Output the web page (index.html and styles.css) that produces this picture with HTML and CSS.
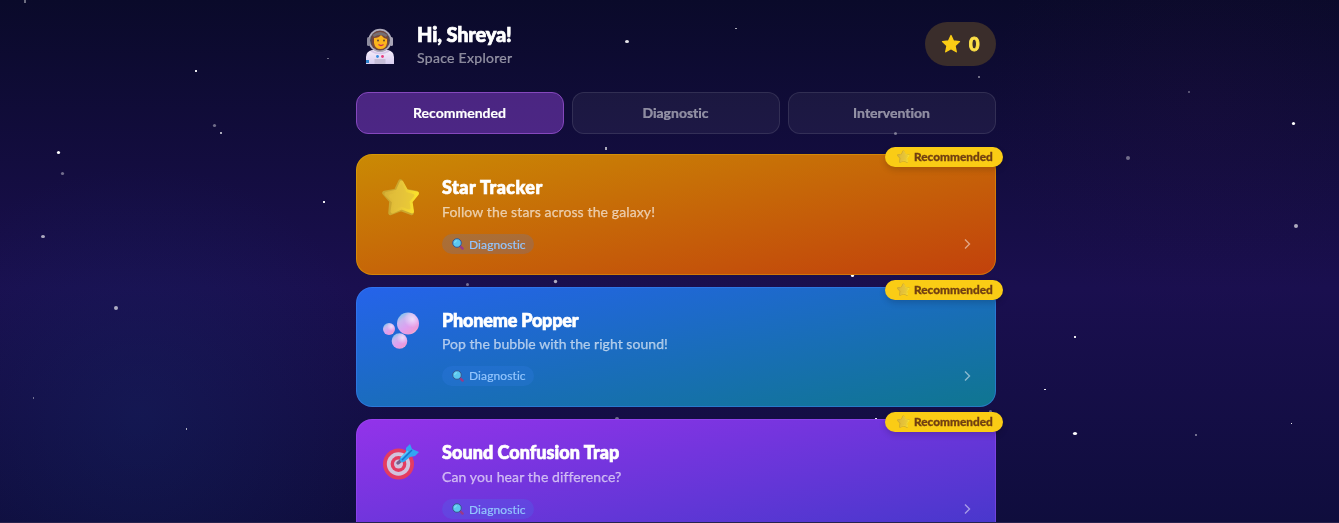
FILE: index.html
```html
<!DOCTYPE html>
<html lang="en">
<head>
  <meta charset="UTF-8" />
  <meta name="viewport" content="width=device-width, initial-scale=1.0"/>
  <title>Space Explorer</title>
  <link rel="stylesheet" href="styles.css">
</head>
<body>
  <svg class="stars" width="1339" height="523" fill="#fff" aria-hidden="true">
    <g opacity="0.4">
      <rect x="24" y="0" width="2" height="3"/>
      <rect x="327" y="58" width="2" height="1"/>
      <circle cx="214.5" cy="125.5" r="1.6"/>
      <circle cx="62.5" cy="173.5" r="1.6"/>
      <rect x="33" y="397" width="1" height="2"/>
      <rect x="1188" y="91" width="2" height="2" opacity="0.7"/>
      <circle cx="1128" cy="158" r="2"/>
      <rect x="1195" y="434" width="2" height="2"/>
      <rect x="978" y="76" width="2" height="2"/>
      <circle cx="895.5" cy="133.5" r="1.5"/>
      <circle cx="467.5" cy="284.5" r="1.5"/>
      <circle cx="617" cy="419" r="2"/>
      <circle cx="990.5" cy="411.5" r="1.5"/>
      <rect x="462" y="109" width="2" height="2"/>
    </g>
    <g opacity="0.65">
      <rect x="220" y="132" width="2" height="2"/>
      <ellipse cx="43" cy="236.5" rx="2" ry="1.5"/>
      <circle cx="116" cy="308" r="2"/>
      <rect x="186" y="428" width="1" height="2"/>
      <circle cx="1296" cy="226" r="2"/>
      <rect x="735" y="28" width="2" height="1"/>
      <rect x="605" y="147" width="2" height="3"/>
      <circle cx="555.5" cy="281.5" r="1.7"/>
    </g>
    <g opacity="0.9">
      <rect x="195" y="70" width="2" height="2"/>
      <rect x="323" y="201" width="2" height="2"/>
      <rect x="1074" y="336" width="2" height="2"/>
      <rect x="1044" y="389" width="2" height="1"/>
      <rect x="1291" y="423" width="1" height="1"/>
      <rect x="875" y="418" width="2" height="1"/>
      <ellipse cx="627" cy="41.5" rx="2" ry="1.5"/>
    </g>
    <circle cx="58.5" cy="152.5" r="1.6"/>
    <circle cx="1293.5" cy="123.5" r="1.6"/>
    <ellipse cx="1075" cy="433.5" rx="2.1" ry="1.6"/>
    <circle cx="852.5" cy="275.5" r="1.6"/>
  </svg>

  <!-- shared icons -->
  <svg class="defs" width="0" height="0" aria-hidden="true">
    <defs>
      <linearGradient id="gold" x1="0" y1="0.3" x2="1" y2="0.4">
        <stop offset="0" stop-color="#d9b336"/>
        <stop offset="0.5" stop-color="#e8c63a"/>
        <stop offset="1" stop-color="#fbe22a"/>
      </linearGradient>
      <linearGradient id="bubble" x1="0.1" y1="0" x2="0.85" y2="1">
        <stop offset="0" stop-color="#62ccec"/>
        <stop offset="0.28" stop-color="#c8b6ef"/>
        <stop offset="0.58" stop-color="#dda0f0"/>
        <stop offset="0.85" stop-color="#ee9ad8"/>
        <stop offset="1" stop-color="#f5d9c0"/>
      </linearGradient>
      <radialGradient id="shine" cx="0.7" cy="0.3" r="0.38">
        <stop offset="0" stop-color="#fff" stop-opacity="0.6"/>
        <stop offset="1" stop-color="#fff" stop-opacity="0"/>
      </radialGradient>
      <linearGradient id="suit" x1="0" y1="0" x2="0" y2="1">
        <stop offset="0" stop-color="#f6eefb"/>
        <stop offset="1" stop-color="#d8cdf0"/>
      </linearGradient>
      <symbol id="star3d" viewBox="0 0 38 38">
        <path d="M18.500 3.500 L23 13 L34.500 15 L27.500 23 L29.500 35 L19 31 L8.500 35 L9.500 23 L2.500 15 L14 13 Z" fill="#cba62e" stroke="#cba62e" stroke-width="4.500" stroke-linejoin="round"/>
        <path d="M19.500 4.500 L24.500 13.500 L35 15.500 L28.500 23.500 L30 33.500 L19.500 29.500 L10.500 33.500 L12 23.500 L4.500 16 L15.500 13.500 Z" fill="url(#gold)" stroke="url(#gold)" stroke-width="4" stroke-linejoin="round"/>
        <path d="M19.500 8 L23.500 15.500 L31 17.500 L26 23 L27 30 L19.500 27 L13 30 L14 23 L8.500 18 L16.500 15.500 Z" fill="#e3c03b" stroke="#e3c03b" stroke-width="3" stroke-linejoin="round" opacity="0.6"/>
      </symbol>
      <symbol id="magnifier" viewBox="0 0 12 12">
        <path d="M7.500 7.500 L10.600 10.600" stroke="#993a86" stroke-width="2.400" stroke-linecap="round"/>
        <circle cx="5" cy="5" r="4.300" fill="#5bc8f0" stroke="#39568f" stroke-width="1"/>
        <path d="M2.700 5 A2.300 2.300 0 0 1 5 2.700" fill="none" stroke="#86e3f7" stroke-width="1"/>
      </symbol>
    </defs>
  </svg>

  <div class="container">
    <header class="header">
      <div class="profile">
        <svg class="avatar" viewBox="0 0 48 44" aria-hidden="true">
          <path d="M10 42 V35 Q10 29 17 28 H31 Q38 29 38 35 V42 Z" fill="url(#suit)"/>
          <circle cx="24" cy="18.500" r="11.700" fill="#aeaaba"/>
          <rect x="11" y="15" width="3" height="9" rx="1.500" fill="#8e8c9e"/>
          <rect x="34" y="15" width="3" height="9" rx="1.500" fill="#aaa6b7"/>
          <circle cx="24" cy="18.500" r="10" fill="#574b50"/>
          <path d="M16 23 V16 Q17 9 24 9 Q31 9 32 16 V23 Q29 28 24 28 Q19 28 16 23 Z" fill="#794638"/>
          <path d="M18 16 Q23 16 25 13 Q27 16 31 17 V21 Q30 27 24.500 27 Q19 27 18 21 Z" fill="#fbb51d"/>
          <path d="M16.500 13 Q24 7 31.500 13 L30 15 Q24 11 18 15 Z" fill="#746e74"/>
          <circle cx="22" cy="18.500" r="0.900" fill="#593c31"/>
          <circle cx="28" cy="18.500" r="0.900" fill="#593c31"/>
          <path d="M22.500 22.500 Q25 24.500 27.500 22.500" fill="none" stroke="#c92d54" stroke-width="1.300"/>
          <path d="M15 29 Q24 34 33 29" fill="none" stroke="#d7c8e9" stroke-width="1.500"/>
          <circle cx="21.500" cy="34.500" r="1.400" fill="#348be0"/>
          <circle cx="26.500" cy="34.500" r="1.400" fill="#e83d7d"/>
          <rect x="18.500" y="37" width="11" height="5" fill="#c7bed8"/>
          <rect x="10" y="38" width="3" height="3" fill="#2e83cc"/>
        </svg>
        <div class="who">
          <h1 class="greeting">Hi, Shreya!</h1>
          <p class="role">Space Explorer</p>
        </div>
      </div>
      <div class="score">
        <svg class="score-star" viewBox="0 0 20 20" aria-hidden="true">
          <path d="M10 1.500 L12.500 7 L18.500 7.600 L14 11.700 L15.300 17.800 L10 14.700 L4.700 17.800 L6 11.700 L1.500 7.600 L7.500 7 Z" fill="#facc15" stroke="#facc15" stroke-width="1.300" stroke-linejoin="round"/>
        </svg>
        <span>0</span>
      </div>
    </header>

    <nav class="tabs">
      <button class="tab active">Recommended</button>
      <button class="tab">Diagnostic</button>
      <button class="tab">Intervention</button>
    </nav>

    <main class="games">
      <article class="card card-star">
        <div class="ribbon"><svg class="ribbon-icon"><use href="#star3d"/></svg><span>Recommended</span></div>
        <svg class="card-icon" viewBox="0 0 38 38" aria-hidden="true"><use href="#star3d"/></svg>
        <div class="card-body">
          <h2 class="card-title title-wide">Star Tracker</h2>
          <p class="card-text">Follow the stars across the galaxy!</p>
          <div class="card-foot">
            <span class="tag"><svg class="tag-icon"><use href="#magnifier"/></svg><span>Diagnostic</span></span>
            <svg class="chevron" viewBox="0 0 8 12"><path d="M2 1.500 L6.500 6 L2 10.500"/></svg>
          </div>
        </div>
      </article>

      <article class="card card-phoneme">
        <div class="ribbon"><svg class="ribbon-icon"><use href="#star3d"/></svg><span>Recommended</span></div>
        <svg class="card-icon" viewBox="0 0 38 38" aria-hidden="true">
          <circle cx="26" cy="12.500" r="11" fill="url(#bubble)"/>
          <circle cx="26" cy="12.500" r="11" fill="url(#shine)"/>
          <circle cx="7" cy="18" r="6" fill="url(#bubble)"/>
          <circle cx="7" cy="18" r="6" fill="url(#shine)"/>
          <circle cx="17.500" cy="30" r="7.800" fill="url(#bubble)"/>
          <circle cx="17.500" cy="30" r="7.800" fill="url(#shine)"/>
        </svg>
        <div class="card-body">
          <h2 class="card-title title-tight">Phoneme Popper</h2>
          <p class="card-text">Pop the bubble with the right sound!</p>
          <div class="card-foot">
            <span class="tag"><svg class="tag-icon"><use href="#magnifier"/></svg><span>Diagnostic</span></span>
            <svg class="chevron" viewBox="0 0 8 12"><path d="M2 1.500 L6.500 6 L2 10.500"/></svg>
          </div>
        </div>
      </article>

      <article class="card card-sound">
        <div class="ribbon"><svg class="ribbon-icon"><use href="#star3d"/></svg><span>Recommended</span></div>
        <svg class="card-icon" viewBox="0 0 38 38" aria-hidden="true">
          <circle cx="16.500" cy="21" r="15.500" fill="#e43c61"/>
          <circle cx="16.500" cy="21" r="11.700" fill="#d2c3de"/>
          <circle cx="16.500" cy="21" r="7.900" fill="#e43c61"/>
          <circle cx="16.500" cy="21" r="4.500" fill="#d2c3de"/>
          <path d="M16 20 L21 16" stroke="#76618c" stroke-width="3.500" stroke-linecap="round"/>
          <path d="M18 15 L24 9 V5 L28 1 L30 6 L37 9 L33 13 L28 14 L22 19 Q17 20 18 15 Z" fill="#32a5f2"/>
          <path d="M20 17 L30 7" stroke="#1671cd" stroke-width="1.500"/>
          <path d="M19 15 L26 8" stroke="#5cc9fa" stroke-width="1.500"/>
        </svg>
        <div class="card-body">
          <h2 class="card-title">Sound Confusion Trap</h2>
          <p class="card-text">Can you hear the difference?</p>
          <div class="card-foot">
            <span class="tag"><svg class="tag-icon"><use href="#magnifier"/></svg><span>Diagnostic</span></span>
            <svg class="chevron" viewBox="0 0 8 12"><path d="M2 1.500 L6.500 6 L2 10.500"/></svg>
          </div>
        </div>
      </article>
    </main>
  </div>
  <div class="bottom-bar"></div>
</body>
</html>
```

FILE: styles.css
```css
* {
  box-sizing: border-box;
}

body {
  margin: 0;
  height: 100vh;
  overflow: hidden;
  position: relative;
  padding-left: 13px;
  font-family: Lato, "Open Sans", sans-serif;
  font-variant-ligatures: none;
  color: #fff;
  background:
    radial-gradient(circle 250px at 140px 415px, rgba(20, 45, 110, 0.3), transparent),
    radial-gradient(circle 220px at 1205px 105px, rgba(70, 20, 80, 0.08), transparent),
    linear-gradient(180deg, #0a0a2a 0%, #1a0f4f 55%, #0f0d3d 100%);
}

h1, h2, p {
  margin: 0;
}

.stars {
  position: absolute;
  top: 0;
  left: 0;
}

.defs {
  position: absolute;
}

.container {
  position: relative;
  width: 640px;
  margin: 0 auto;
  padding-top: 22px;
}

.header {
  display: flex;
  align-items: center;
  justify-content: space-between;
  height: 44px;
}

.profile {
  display: flex;
  align-items: center;
  gap: 13px;
}

.avatar {
  width: 48px;
  height: 44px;
}

.who {
  padding-top: 2px;
}

.greeting {
  font-size: 20px;
  line-height: 25px;
  font-weight: 900;
  letter-spacing: -0.15px;
  -webkit-text-stroke: 0.7px currentColor;
}

.role {
  font-size: 14px;
  line-height: 22px;
  letter-spacing: 0.3px;
  color: rgba(255, 255, 255, 0.5);
  -webkit-text-stroke: 0.2px currentColor;
}

.score {
  display: flex;
  align-items: center;
  gap: 8px;
  height: 44px;
  width: 71px;
  padding: 0 16px;
  border-radius: 22px;
  background: #3a2d2b;
  color: #fde047;
  font-size: 18px;
  font-weight: 900;
  -webkit-text-stroke: 0.9px currentColor;
}

.score-star {
  width: 20px;
  height: 20px;
}

.tabs {
  display: grid;
  grid-template-columns: repeat(3, 1fr);
  gap: 8px;
  margin-top: 26px;
}

.tab {
  height: 42px;
  padding: 0 1px 1px 0;
  border: 1px solid rgba(255, 255, 255, 0.1);
  border-radius: 12px;
  background: rgba(255, 255, 255, 0.05);
  color: rgba(255, 255, 255, 0.5);
  font-family: inherit;
  font-size: 14px;
  font-weight: 700;
  font-variant-ligatures: none;
  -webkit-text-stroke: 0.2px currentColor;
}

.tab.active {
  border-color: #8548bd;
  background: rgba(147, 70, 220, 0.46);
  color: #fff;
}

.games {
  display: flex;
  flex-direction: column;
  gap: 12px;
  margin-top: 20px;
}

.card {
  position: relative;
  display: flex;
  gap: 22px;
  height: 120.5px;
  flex-shrink: 0;
  padding: 20px 24px 0 25px;
  border: 1px solid;
  border-radius: 16px;
}

.card-star {
  background: linear-gradient(to bottom right, #ca8a04, #c2410c) border-box;
  border-color: rgba(234, 179, 8, 0.4);
}

.card-phoneme {
  background: linear-gradient(to bottom right, #2563eb, #0f7690) border-box;
  border-color: rgba(59, 130, 246, 0.5);
}

.card-sound {
  background: linear-gradient(to bottom right, #9333ea, #4338ca) border-box;
  border-color: rgba(168, 85, 247, 0.4);
}

.card-icon {
  width: 38px;
  height: 38px;
  margin-top: 3px;
  flex-shrink: 0;
}

.card-body {
  flex: 1;
}

.card-title {
  font-size: 18px;
  line-height: 24px;
  font-weight: 900;
  letter-spacing: 0.05px;
  -webkit-text-stroke: 0.7px currentColor;
}

.title-wide {
  letter-spacing: 0.45px;
}

.title-tight {
  letter-spacing: -0.2px;
}

.card-text {
  font-size: 14px;
  line-height: 20px;
  margin-top: 3px;
  letter-spacing: 0.12px;
  color: rgba(255, 255, 255, 0.6);
  -webkit-text-stroke: 0.25px currentColor;
}

.card-phoneme .card-text {
  margin-top: 2px;
  letter-spacing: 0.04px;
}

.card-foot {
  display: flex;
  align-items: center;
  justify-content: space-between;
  margin-top: 12px;
}

.tag {
  display: flex;
  align-items: center;
  gap: 5px;
  height: 20px;
  width: 92px;
  padding-left: 10px;
  border-radius: 10px;
  background: rgba(59, 130, 246, 0.2);
  color: #93c5fd;
  font-size: 12px;
  letter-spacing: 0.1px;
  -webkit-text-stroke: 0.2px currentColor;
}

.tag-icon {
  width: 12px;
  height: 12px;
}

.chevron {
  width: 8px;
  height: 12px;
  fill: none;
  stroke: rgba(255, 255, 255, 0.5);
  stroke-width: 1.4;
}

.ribbon {
  position: absolute;
  top: -8px;
  right: -8px;
  display: flex;
  align-items: center;
  gap: 4px;
  width: 118px;
  height: 20px;
  padding: 0 0 1px 12px;
  border-radius: 10px;
  background: #facc15;
  box-shadow: 0 3px 6px rgba(0, 0, 0, 0.16);
  color: #713f12;
  font-size: 11.8px;
  font-weight: 900;
  -webkit-text-stroke: 0.3px currentColor;
}

.ribbon-icon {
  width: 13px;
  height: 13px;
}

/* top edge of the bar below the fold */
.bottom-bar {
  position: absolute;
  bottom: 0;
  left: 0;
  right: 0;
  height: 1px;
  background: #26234d;
}
```
